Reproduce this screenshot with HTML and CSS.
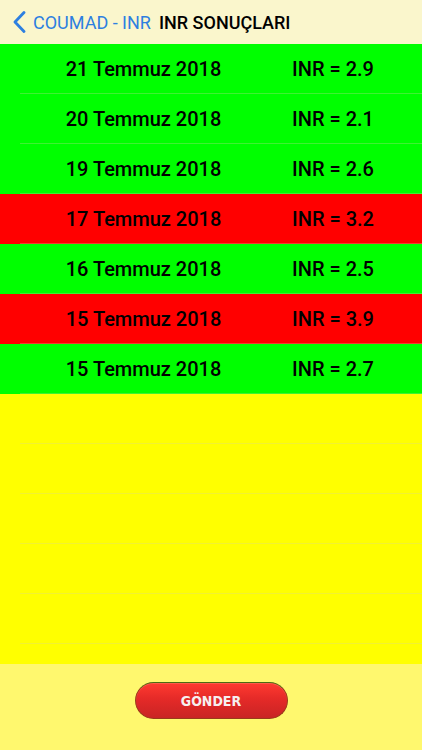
FILE: index.html
```html
<!DOCTYPE html>
<html lang="tr">
<head>
<meta charset="utf-8">
<title>INR SONUÇLARI</title>
<link rel="stylesheet" href="styles.css">
</head>
<body>
<div class="screen">
  <header class="navbar">
    <a class="back">
      <svg class="chev" width="13" height="22" viewBox="0 0 13 22"><path d="M11 1.5 L2 11 L11 20.5" fill="none" stroke="#2d7fe0" stroke-width="2.8" stroke-linecap="round" stroke-linejoin="round"/></svg>
      <span class="back-text">COUMAD - INR</span>
    </a>
    <span class="title">INR SONUÇLARI</span>
  </header>
  <main class="list">
    <div class="row ok"><span class="date">21 Temmuz 2018</span><span class="inr">INR = 2.9</span></div>
    <div class="row ok"><span class="date">20 Temmuz 2018</span><span class="inr">INR = 2.1</span></div>
    <div class="row ok"><span class="date">19 Temmuz 2018</span><span class="inr">INR = 2.6</span></div>
    <div class="row high"><span class="date">17 Temmuz 2018</span><span class="inr">INR = 3.2</span></div>
    <div class="row ok"><span class="date">16 Temmuz 2018</span><span class="inr">INR = 2.5</span></div>
    <div class="row high"><span class="date">15 Temmuz 2018</span><span class="inr">INR = 3.9</span></div>
    <div class="row ok"><span class="date">15 Temmuz 2018</span><span class="inr">INR = 2.7</span></div>
    <div class="row empty"></div>
    <div class="row empty"></div>
    <div class="row empty"></div>
    <div class="row empty"></div>
    <div class="row empty"></div>
  </main>
  <footer class="footer">
    <button class="send">GÖNDER</button>
  </footer>
</div>
</body>
</html>
```
FILE: styles.css
```css
* { box-sizing: border-box; }
html, body { margin: 0; padding: 0; }
body { width: 422px; height: 750px; overflow: hidden; font-family: Roboto, "Liberation Sans", Arial, sans-serif; }
.screen { display: flex; flex-direction: column; height: 750px; }
.navbar {
  height: 44px;
  background: #faf6cc;
  display: flex;
  align-items: center;
  padding-left: 13px;
  flex-shrink: 0;
}
.back { display: flex; align-items: center; gap: 7px; color: #2d7fe0; text-decoration: none; }
.chev { display: block; }
.back-text { font-family: Roboto, "Liberation Sans", sans-serif; font-size: 18px; color: #2d7fe0; }
.title { margin-left: 8px; font-family: Roboto, "Liberation Sans", sans-serif; font-weight: 500; font-size: 18px; color: #000; }
.list { flex: 1; background: #ffff00; display: flex; flex-direction: column; }
.row {
  height: 50px;
  flex-shrink: 0;
  display: grid;
  grid-template-columns: 287px 92px;
  align-items: center;
  position: relative;
  font-size: 20px;
  font-weight: 500;
  color: #000;
}
.row::after {
  content: "";
  position: absolute;
  left: 20px; right: 0; bottom: 0;
  height: 1px;
  background: rgba(210, 210, 170, 0.3);
}
.row.ok { background: #00ff00; }
.row.high { background: #ff0000; }
.row.empty { background: #ffff00; }
.date, .inr { text-align: center; white-space: nowrap; }
.footer {
  height: 86px;
  flex-shrink: 0;
  background: #fff86e;
  display: flex;
  justify-content: center;
  align-items: flex-start;
  padding-top: 18px;
}
.send {
  width: 153px;
  height: 37px;
  border-radius: 19px;
  border: 1px solid #9a3a1a;
  border-top-color: #4d6a12;
  background: linear-gradient(to bottom, #ff3a30 0%, #e52a28 45%, #c92424 100%);
  color: #f6f0f0;
  font-family: "DejaVu Sans Condensed", "DejaVu Sans", sans-serif;
  font-stretch: condensed;
  font-weight: 700;
  font-size: 14px;
  padding: 0;
  box-shadow: inset 0 1px 0 rgba(255,120,100,0.5);
}
```
